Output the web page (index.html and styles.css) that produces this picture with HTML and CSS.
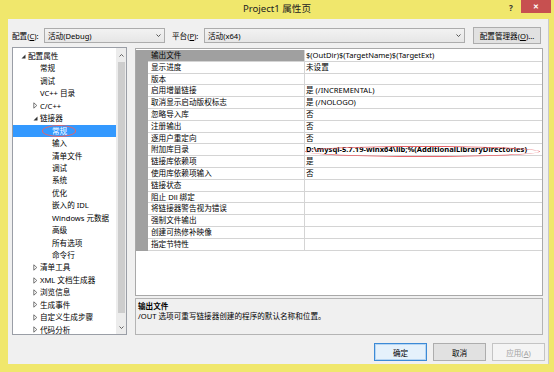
FILE: index.html
```html
<!DOCTYPE html>
<html lang="zh-CN">
<head>
  <meta charset="UTF-8">
  <title>Project1 属性页</title>
  <link rel="stylesheet" href="styles.css">
</head>
<body>
  <div class="window">
    <div class="titlebar">
      <span class="title">Project1 属性页</span>
      <span class="help">?</span>
      <span class="close">✕</span>
    </div>

    <div class="client">
      <div class="toolbar">
        <span class="lbl">配置(<u>C</u>):</span>
        <div class="combo combo-config">
          <span>活动(Debug)</span>
          <svg class="chev" width="5" height="3" viewBox="0 0 5 3"><polyline points="0.5,0.5 2.5,2.5 4.5,0.5" fill="none" stroke="#444" stroke-width="0.9"/></svg>
        </div>
        <span class="lbl lbl-platform">平台(<u>P</u>):</span>
        <div class="combo combo-platform">
          <span>活动(x64)</span>
          <svg class="chev" width="5" height="3" viewBox="0 0 5 3"><polyline points="0.5,0.5 2.5,2.5 4.5,0.5" fill="none" stroke="#444" stroke-width="0.9"/></svg>
        </div>
        <button class="btn btn-manager">配置管理器(<u>O</u>)...</button>
      </div>

      <div class="main">
        <div class="tree">
          <ul class="tree-list">
            <li class="lv0"><svg class="tw" width="5" height="5" viewBox="0 0 5 5"><polygon points="4.5,0.5 4.5,4.5 0.5,4.5" fill="#333"/></svg>配置属性</li>
            <li class="lv1"><i class="tw"></i>常规</li>
            <li class="lv1"><i class="tw"></i>调试</li>
            <li class="lv1"><i class="tw"></i>VC++ 目录</li>
            <li class="lv1"><svg class="tw" width="5" height="7" viewBox="0 0 5 7"><polygon points="0.8,0.8 3.8,3.5 0.8,6.2" fill="none" stroke="#555" stroke-width="0.8"/></svg>C/C++</li>
            <li class="lv1"><svg class="tw" width="5" height="5" viewBox="0 0 5 5"><polygon points="4.5,0.5 4.5,4.5 0.5,4.5" fill="#333"/></svg>链接器</li>
            <li class="lv2 selected"><i class="tw"></i>常规</li>
            <li class="lv2"><i class="tw"></i>输入</li>
            <li class="lv2"><i class="tw"></i>清单文件</li>
            <li class="lv2"><i class="tw"></i>调试</li>
            <li class="lv2"><i class="tw"></i>系统</li>
            <li class="lv2"><i class="tw"></i>优化</li>
            <li class="lv2"><i class="tw"></i>嵌入的 IDL</li>
            <li class="lv2"><i class="tw"></i>Windows 元数据</li>
            <li class="lv2"><i class="tw"></i>高级</li>
            <li class="lv2"><i class="tw"></i>所有选项</li>
            <li class="lv2"><i class="tw"></i>命令行</li>
            <li class="lv1"><svg class="tw" width="5" height="7" viewBox="0 0 5 7"><polygon points="0.8,0.8 3.8,3.5 0.8,6.2" fill="none" stroke="#555" stroke-width="0.8"/></svg>清单工具</li>
            <li class="lv1"><svg class="tw" width="5" height="7" viewBox="0 0 5 7"><polygon points="0.8,0.8 3.8,3.5 0.8,6.2" fill="none" stroke="#555" stroke-width="0.8"/></svg>XML 文档生成器</li>
            <li class="lv1"><svg class="tw" width="5" height="7" viewBox="0 0 5 7"><polygon points="0.8,0.8 3.8,3.5 0.8,6.2" fill="none" stroke="#555" stroke-width="0.8"/></svg>浏览信息</li>
            <li class="lv1"><svg class="tw" width="5" height="7" viewBox="0 0 5 7"><polygon points="0.8,0.8 3.8,3.5 0.8,6.2" fill="none" stroke="#555" stroke-width="0.8"/></svg>生成事件</li>
            <li class="lv1"><svg class="tw" width="5" height="7" viewBox="0 0 5 7"><polygon points="0.8,0.8 3.8,3.5 0.8,6.2" fill="none" stroke="#555" stroke-width="0.8"/></svg>自定义生成步骤</li>
            <li class="lv1"><svg class="tw" width="5" height="7" viewBox="0 0 5 7"><polygon points="0.8,0.8 3.8,3.5 0.8,6.2" fill="none" stroke="#555" stroke-width="0.8"/></svg>代码分析</li>
          </ul>
          <div class="vscroll">
            <div class="arrow"><svg width="5" height="3" viewBox="0 0 5 3"><polyline points="0.5,2.5 2.5,0.5 4.5,2.5" fill="none" stroke="#555" stroke-width="0.9"/></svg></div>
            <div class="track"><div class="thumb"></div></div>
            <div class="arrow"><svg width="5" height="3" viewBox="0 0 5 3"><polyline points="0.5,0.5 2.5,2.5 4.5,0.5" fill="none" stroke="#555" stroke-width="0.9"/></svg></div>
          </div>
          <span class="mark mark-tree"></span>
        </div>

        <div class="right">
          <div class="grid">
            <div class="row current"><span class="gut"></span><span class="key">输出文件</span><span class="val">$(OutDir)$(TargetName)$(TargetExt)</span></div>
            <div class="row"><span class="gut"></span><span class="key">显示进度</span><span class="val">未设置</span></div>
            <div class="row"><span class="gut"></span><span class="key">版本</span><span class="val"></span></div>
            <div class="row"><span class="gut"></span><span class="key">启用增量链接</span><span class="val">是 (/INCREMENTAL)</span></div>
            <div class="row"><span class="gut"></span><span class="key">取消显示启动版权标志</span><span class="val">是 (/NOLOGO)</span></div>
            <div class="row"><span class="gut"></span><span class="key">忽略导入库</span><span class="val">否</span></div>
            <div class="row"><span class="gut"></span><span class="key">注册输出</span><span class="val">否</span></div>
            <div class="row"><span class="gut"></span><span class="key">逐用户重定向</span><span class="val">否</span></div>
            <div class="row"><span class="gut"></span><span class="key">附加库目录</span><span class="val bold">D:\mysql-5.7.19-winx64\lib;%(AdditionalLibraryDirectories)</span></div>
            <div class="row"><span class="gut"></span><span class="key">链接库依赖项</span><span class="val">是</span></div>
            <div class="row"><span class="gut"></span><span class="key">使用库依赖项输入</span><span class="val">否</span></div>
            <div class="row"><span class="gut"></span><span class="key">链接状态</span><span class="val"></span></div>
            <div class="row"><span class="gut"></span><span class="key">阻止 Dll 绑定</span><span class="val"></span></div>
            <div class="row"><span class="gut"></span><span class="key">将链接器警告视为错误</span><span class="val"></span></div>
            <div class="row"><span class="gut"></span><span class="key">强制文件输出</span><span class="val"></span></div>
            <div class="row"><span class="gut"></span><span class="key">创建可热修补映像</span><span class="val"></span></div>
            <div class="row"><span class="gut"></span><span class="key">指定节特性</span><span class="val"></span></div>
            <span class="mark mark-grid"></span>
          </div>
          <div class="desc">
            <div class="desc-title">输出文件</div>
            <div class="desc-text">/OUT 选项可重写链接器创建的程序的默认名称和位置。</div>
          </div>
        </div>
      </div>

      <div class="actions">
        <button class="btn btn-ok">确定</button>
        <button class="btn">取消</button>
        <button class="btn btn-off">应用(<u>A</u>)</button>
      </div>
    </div>
  </div>
</body>
</html>
```

FILE: styles.css
```css
body {
  margin: 0;
  padding: 0;
  font-family: "Noto Sans", "Noto Sans CJK SC", sans-serif;
  font-size: 7.6px;
  color: #000;
  background-color: #f0e76c;
}

.window {
  width: 554px;
  height: 372px;
  background-color: #f0e76c;
  display: flex;
  flex-direction: column;
  overflow: hidden;
}

/* title bar */
.titlebar {
  position: relative;
  height: 19px;
  flex: none;
  text-align: center;
  line-height: 19px;
}

.title {
  font-size: 9.6px;
  color: #222;
  position: relative;
  top: -1px;
}

.help {
  position: absolute;
  left: 509px;
  top: -2px;
  font-size: 8px;
  font-weight: bold;
  color: #333;
}

.close {
  position: absolute;
  left: 521px;
  top: 0;
  width: 30px;
  height: 13px;
  line-height: 13px;
  background-color: #c75050;
  color: white;
  font-size: 7px;
  font-weight: bold;
}

/* dialog body */
.client {
  flex: none;
  height: 345px;
  margin: 0 5px 0 8px;
  background-color: #f0f0f0;
  border-right: 1px solid #c9c9c9;
  display: flex;
  flex-direction: column;
}

.toolbar {
  display: flex;
  align-items: center;
  height: 17px;
  margin-top: 8px;
  padding-left: 4px;
}

.lbl {
  width: 30px;
  white-space: nowrap;
}

.lbl-platform {
  margin-left: 7px;
}

.combo {
  height: 15px;
  box-sizing: border-box;
  border: 1px solid #acacac;
  background: linear-gradient(#f2f2f2, #e6e6e6);
  display: flex;
  align-items: center;
  justify-content: space-between;
  padding: 0 3px 0 3px;
}

.combo-config {
  width: 121px;
  margin-left: 2px;
}

.combo-platform {
  width: 261px;
  margin-left: 2px;
}

.btn {
  font-family: inherit;
  font-size: 7.6px;
  color: #000;
  background-color: #e1e1e1;
  border: 1px solid #adadad;
  padding: 0;
  height: 18px;
  width: 53px;
  box-sizing: border-box;
}

.btn-manager {
  width: 68px;
  height: 17px;
  margin-left: 8px;
}

.btn-ok {
  border-color: #3c8ad6;
  background-color: #e5f1fb;
  box-shadow: inset 0 0 0 1px #b5d5f3;
}

.btn-off {
  color: #a2a2a2;
  background-color: #f4f4f4;
  border-color: #c4c4c4;
}

/* main area */
.main {
  display: flex;
  height: 288px;
  margin-top: 3px;
  padding-left: 4px;
  padding-right: 5px;
}

.tree {
  position: relative;
  width: 115px;
  height: 288px;
  box-sizing: border-box;
  border: 1px solid #9a9ea6;
  background-color: white;
  display: flex;
  overflow: hidden;
}

.tree-list {
  list-style: none;
  margin: 0;
  padding: 2px 0 0 0;
  width: 103px;
  flex: none;
}

.tree-list li {
  height: 12.45px;
  line-height: 12.45px;
  display: flex;
  align-items: center;
  white-space: nowrap;
}

.tree-list .tw {
  width: 9px;
  flex: none;
  display: block;
}

.tree-list .lv0 { padding-left: 6px; }
.tree-list .lv1 { padding-left: 18px; }
.tree-list .lv2 { padding-left: 30px; }

.tree-list .selected {
  background-color: #3399ff;
  color: white;
}

.vscroll {
  width: 11px;
  flex: none;
  background-color: #ececec;
  display: flex;
  flex-direction: column;
}

.vscroll .arrow {
  height: 14px;
  display: flex;
  align-items: center;
  justify-content: center;
}

.vscroll .track {
  flex: 1;
  padding: 0 2px;
}

.vscroll .thumb {
  height: 251px;
  background-color: #cdcdcd;
}

/* property grid */
.right {
  flex: 1;
  margin-left: 8px;
  display: flex;
  flex-direction: column;
}

.grid {
  position: relative;
  height: 248px;
  margin-top: 1px;
  box-sizing: border-box;
  border: 1px solid #a9a9a9;
  background-color: white;
  padding-top: 1px;
}

.row {
  display: grid;
  grid-template-columns: 12px 157px 1fr;
  height: 11.8px;
  line-height: 10.8px;
}

.row span {
  white-space: nowrap;
  overflow: hidden;
}

.row .gut {
  background-color: #a0a0a0;
}

.row .key {
  padding-left: 3px;
  border-right: 1px solid #d4d4d4;
  border-bottom: 1px solid #d4d4d4;
}

.row .val {
  padding-left: 1px;
  border-bottom: 1px solid #d4d4d4;
}

.row.current .key {
  background-color: #a0a0a0;
}

.val.bold {
  font-weight: bold;
}

.desc {
  height: 37px;
  margin-top: 2px;
  box-sizing: border-box;
  border: 1px solid #b4b4b4;
  background-color: #f0f0f0;
  padding: 2px 0 0 2px;
  line-height: 10px;
}

.desc-title {
  font-weight: bold;
}

/* red annotation marks */
.mark {
  position: absolute;
  border: 1px solid #e5646a;
  border-radius: 50%;
}

.mark-tree {
  left: 29px;
  top: 77px;
  width: 32px;
  height: 10px;
}

.mark-grid {
  left: 169px;
  top: 97px;
  width: 233px;
  height: 9px;
}

.actions {
  display: flex;
  justify-content: flex-end;
  gap: 6px;
  margin-top: 8px;
  padding-right: 3px;
}
```
